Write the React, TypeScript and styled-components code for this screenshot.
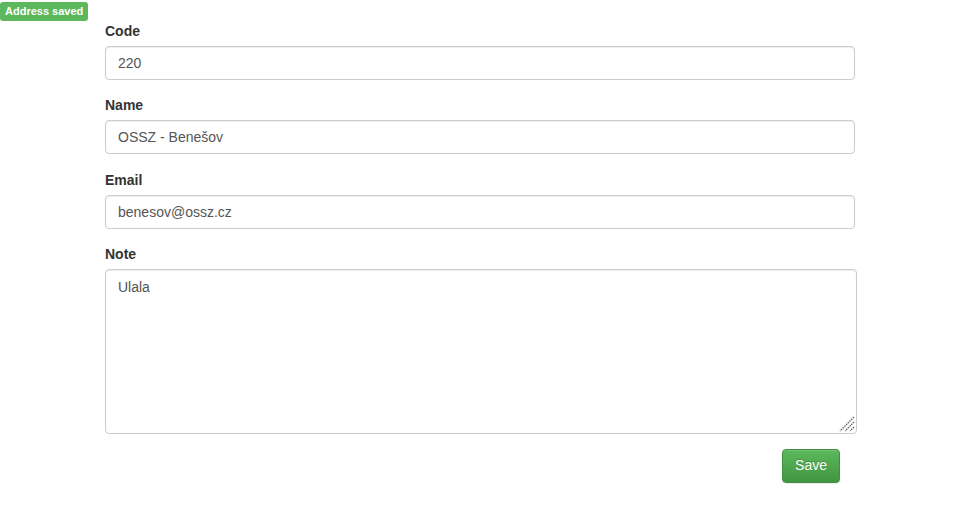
import styled, { createGlobalStyle } from 'styled-components';

const GlobalStyle = createGlobalStyle`
  * {
    box-sizing: border-box;
  }

  body {
    margin: 0;
    background-color: #ffffff;
    color: #333333;
    font-family: 'Liberation Sans', Arial, sans-serif;
    font-size: 14px;
    line-height: 1.428571;
  }
`;

const Page = styled.div`
  position: relative;
  padding: 21px 0 40px 105px;
`;

const Badge = styled.span`
  position: absolute;
  top: 2px;
  left: 0;
  height: 19px;
  padding: 0 5px;
  border-radius: 3px;
  background-color: #5cb85c;
  color: #ffffff;
  font-size: 11px;
  font-weight: 700;
  line-height: 19px;
  white-space: nowrap;
`;

const Form = styled.form`
  width: 752px;
  display: flex;
  flex-direction: column;
`;

const Group = styled.div<{ $gap?: number }>`
  display: flex;
  flex-direction: column;
  margin-bottom: ${(p) => p.$gap ?? 15}px;
`;

const Label = styled.label`
  font-weight: 700;
  line-height: 20px;
  margin-bottom: 5px;
`;

const Input = styled.input`
  width: 750px;
  height: 34px;
  padding: 6px 12px;
  font: inherit;
  color: #555555;
  background-color: #ffffff;
  border: 1px solid #cccccc;
  border-radius: 4px;
  box-shadow: inset 0 1px 1px rgba(0, 0, 0, 0.075);
  outline: none;
`;

const AreaWrap = styled.div`
  position: relative;
  width: 752px;
  height: 165px;
`;

const TextArea = styled.textarea`
  display: block;
  width: 100%;
  height: 100%;
  padding: 8px 12px;
  font: inherit;
  color: #555555;
  background-color: #ffffff;
  border: 1px solid #cccccc;
  border-radius: 4px;
  box-shadow: inset 0 1px 1px rgba(0, 0, 0, 0.075);
  outline: none;
  resize: none;
`;

const Grip = styled.svg`
  position: absolute;
  right: 2px;
  bottom: 2px;
  pointer-events: none;
`;

const Actions = styled.div`
  display: flex;
  justify-content: flex-end;
  padding-right: 17px;
`;

const SaveButton = styled.button`
  height: 34px;
  padding: 6px 12px;
  font: inherit;
  color: #ffffff;
  background-image: linear-gradient(to bottom, #5cb85c 0%, #419641 100%);
  border: 1px solid #3e8f3e;
  border-radius: 4px;
  text-shadow: 0 -1px 0 rgba(0, 0, 0, 0.2);
  box-shadow: inset 0 1px 0 rgba(255, 255, 255, 0.15), 0 1px 1px rgba(0, 0, 0, 0.075);
  cursor: pointer;
`;

export default function App() {
  return (
    <>
      <GlobalStyle />
      <Page>
        <Badge>Address saved</Badge>
        <Form onSubmit={(e) => e.preventDefault()}>
          <Group>
            <Label htmlFor="code">Code</Label>
            <Input id="code" defaultValue="220" />
          </Group>
          <Group $gap={16}>
            <Label htmlFor="name">Name</Label>
            <Input id="name" defaultValue="OSSZ - Benešov" />
          </Group>
          <Group>
            <Label htmlFor="email">Email</Label>
            <Input id="email" defaultValue="benesov@ossz.cz" />
          </Group>
          <Group>
            <Label htmlFor="note">Note</Label>
            <AreaWrap>
              <TextArea id="note" defaultValue="Ulala" />
              <Grip width="16" height="16" viewBox="0 0 16 16">
                <g stroke="#666666" strokeWidth="1.3" strokeDasharray="1.6 0.8">
                  <line x1="15" y1="1" x2="1" y2="15" />
                  <line x1="15" y1="6" x2="6" y2="15" />
                  <line x1="15" y1="11" x2="11" y2="15" />
                </g>
              </Grip>
            </AreaWrap>
          </Group>
          <Actions>
            <SaveButton type="submit">Save</SaveButton>
          </Actions>
        </Form>
      </Page>
    </>
  );
}
